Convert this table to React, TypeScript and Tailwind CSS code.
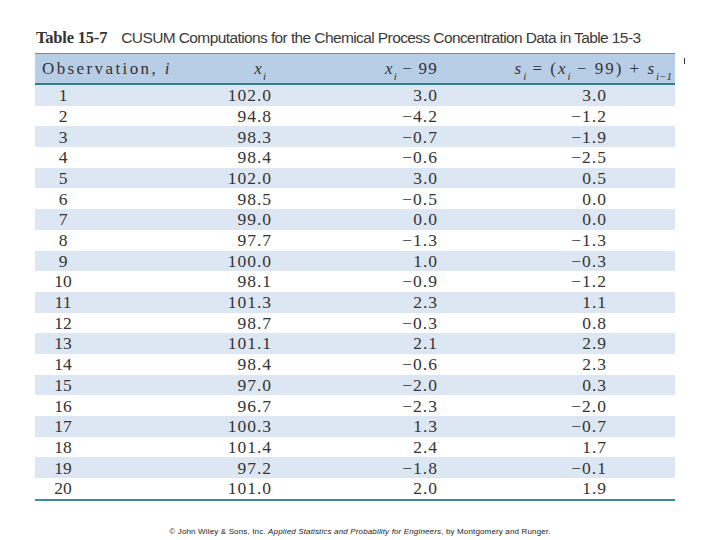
import React from 'react';

type Row = [string, string, string, string];

const rows: Row[] = [
  ['1', '102.0', '3.0', '3.0'],
  ['2', '94.8', '−4.2', '−1.2'],
  ['3', '98.3', '−0.7', '−1.9'],
  ['4', '98.4', '−0.6', '−2.5'],
  ['5', '102.0', '3.0', '0.5'],
  ['6', '98.5', '−0.5', '0.0'],
  ['7', '99.0', '0.0', '0.0'],
  ['8', '97.7', '−1.3', '−1.3'],
  ['9', '100.0', '1.0', '−0.3'],
  ['10', '98.1', '−0.9', '−1.2'],
  ['11', '101.3', '2.3', '1.1'],
  ['12', '98.7', '−0.3', '0.8'],
  ['13', '101.1', '2.1', '2.9'],
  ['14', '98.4', '−0.6', '2.3'],
  ['15', '97.0', '−2.0', '0.3'],
  ['16', '96.7', '−2.3', '−2.0'],
  ['17', '100.3', '1.3', '−0.7'],
  ['18', '101.4', '2.4', '1.7'],
  ['19', '97.2', '−1.8', '−0.1'],
  ['20', '101.0', '2.0', '1.9'],
];

// italic math variable with optional subscript
const V = ({ v, sub }: { v: string; sub?: string }) => (
  <span>
    <i>{v}</i>
    {sub && <sub className="text-[11px] italic tracking-normal align-[-3px]">{sub}</sub>}
  </span>
);

export default function App() {
  return (
    <div className="w-[720px] h-[540px] bg-white relative font-['Liberation_Serif',serif] text-[#333]">
      <div className="pt-[28px] pl-[36px] h-[53px] leading-[20px] whitespace-nowrap">
        <span className="font-bold text-[16.5px] tracking-[-0.2px]">Table 15-7</span>
        <span className="ml-[14px] font-['Liberation_Sans',sans-serif] text-[15.5px] tracking-[-0.6px] text-[#3a3a3a]">
          CUSUM Computations for the Chemical Process Concentration Data in Table 15-3
        </span>
      </div>

      <div className="relative ml-[35px] w-[640px]">
        <div className="absolute right-[-10px] top-[5px] w-px h-[6px] bg-[#333]" />
        <div className="h-px bg-[#5b93c7]" />
        <div className="flex items-center h-[29px] bg-[#b8cde6] text-[17px] tracking-[1.2px] whitespace-nowrap">
          <div className="w-[56px] pl-[7px] tracking-[2.4px]">
            Observation, <i>i</i>
          </div>
          <div className="w-[181px] text-right pr-[6px]">
            <V v="x" sub="i" />
          </div>
          <div className="w-[166px] text-right">
            <V v="x" sub="i" /> − 99
          </div>
          <div className="flex-1 text-right pr-[3px] tracking-[2px]">
            <V v="s" sub="i" /> = (<V v="x" sub="i" /> − 99) + <V v="s" sub="i−1" />
          </div>
        </div>
        <div className="h-[2px] bg-[#2f7f8e]" />
        {rows.map((r, idx) => (
          <div
            key={r[0]}
            className={`flex items-center h-[20.7px] text-[17.5px] tracking-[1px] ${idx % 2 === 0 ? 'bg-[#dde7f3]' : 'bg-white'}`}
          >
            <div className="w-[56px] text-center tracking-normal">{r[0]}</div>
            <div className="w-[181px] text-right">{r[1]}</div>
            <div className="w-[166px] text-right">{r[2]}</div>
            <div className="w-[169px] text-right">{r[3]}</div>
          </div>
        ))}
        <div className="h-[2px] bg-[#3a8e95]" />
      </div>

      <div className="absolute left-0 right-0 top-[527px] text-center text-[8px] leading-[10px] font-['Liberation_Sans',sans-serif] text-[#222] tracking-[0.15px]">
        © John Wiley &amp; Sons, Inc. <i>Applied Statistics and Probability for Engineers</i>, by Montgomery and Runger.
      </div>
    </div>
  );
}
